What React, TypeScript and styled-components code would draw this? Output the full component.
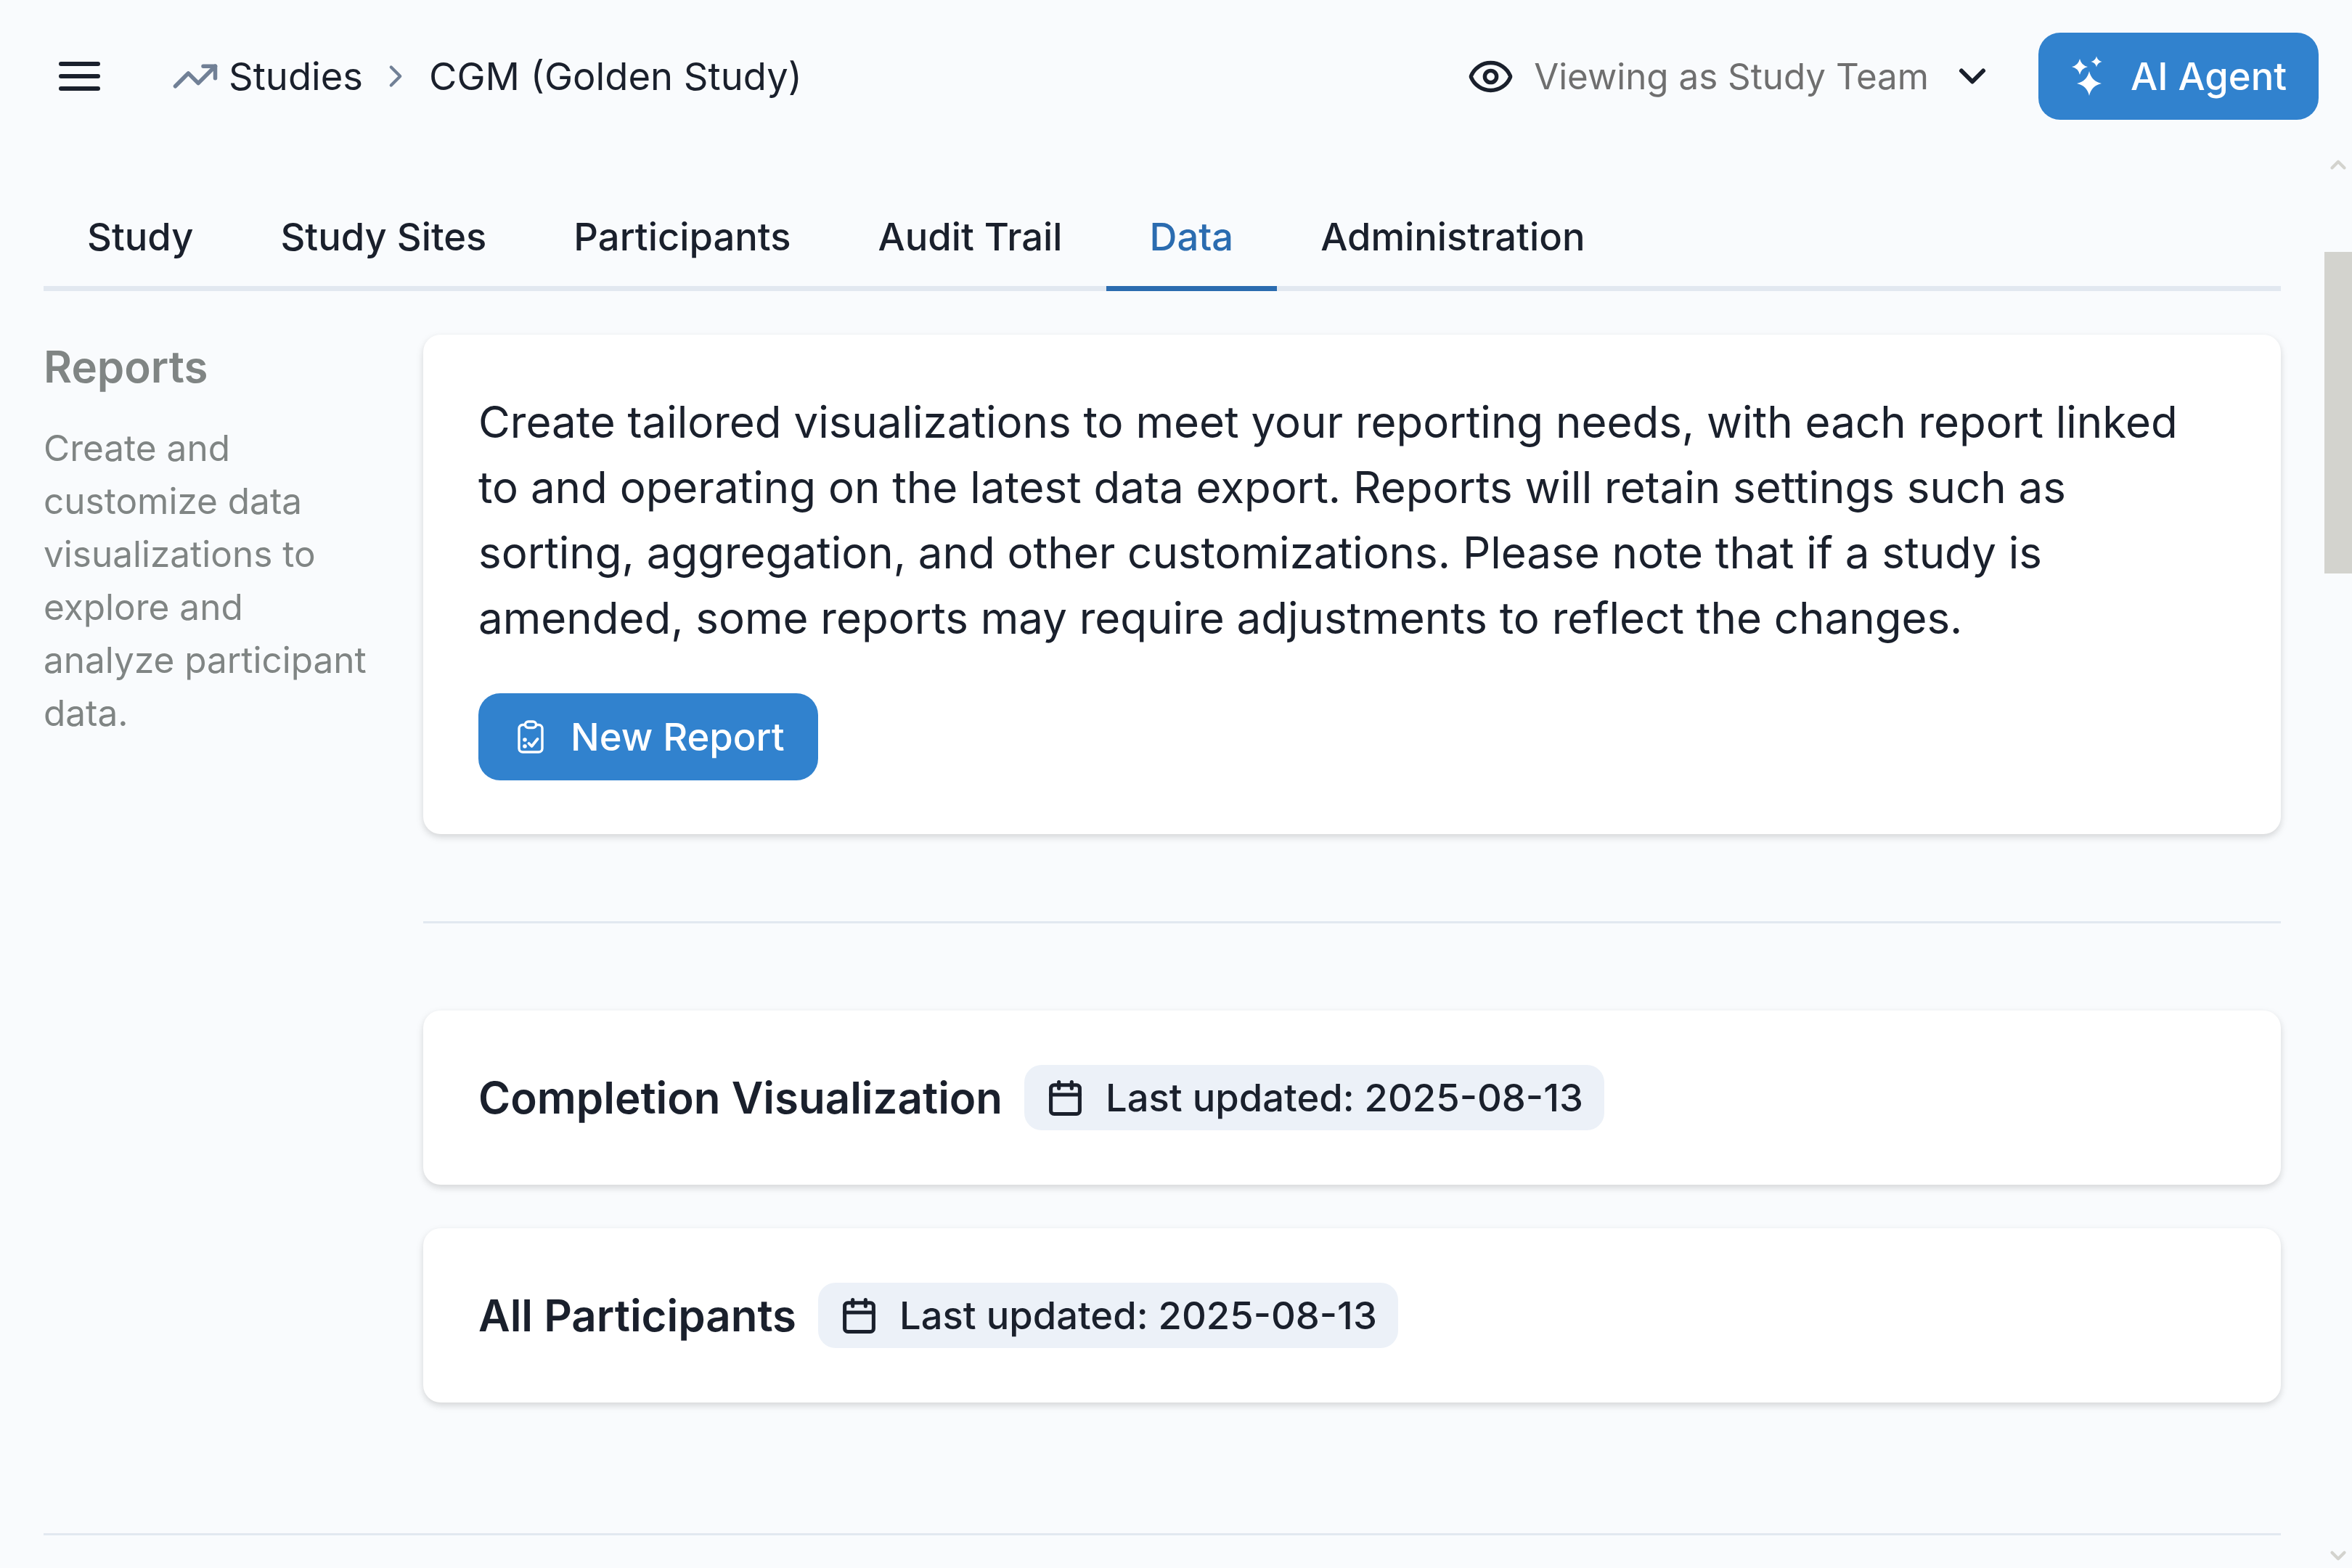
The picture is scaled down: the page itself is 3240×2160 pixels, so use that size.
import React from "react";
import styled, { createGlobalStyle } from "styled-components";
import { TrendingUp, ChevronRight, ChevronDown, ChevronUp, Eye, Calendar } from "lucide-react";

const Global = createGlobalStyle`
  html, body { margin: 0; padding: 0; background: #f9fbfd; }
  body { font-family: Inter, "Liberation Sans", sans-serif; color: #1a202c; }
  * { box-sizing: border-box; }
`;

const Page = styled.div`
  position: relative;
  width: 3240px;
  height: 2160px;
  overflow: hidden;
  background: #f9fbfd;
`;

const Header = styled.header`
  display: flex;
  align-items: center;
  height: 210px;
  padding: 0 46px 0 80px;
`;

const MenuButton = styled.span`
  display: flex;
  margin-right: 98px;
  color: #1a202c;
`;

const Crumb = styled.span`
  display: flex;
  align-items: center;
  font-size: 52.5px;
  color: #1a202c;
`;

const CrumbIcon = styled.span`
  display: flex;
  color: #718096;
  margin-right: 13px;
`;

const CrumbSep = styled.span`
  display: flex;
  color: #718096;
  margin: 0 21px 0 20px;
`;

const Spacer = styled.div`
  flex: 1;
`;

const ViewAs = styled.div`
  display: flex;
  align-items: center;
  font-size: 49.3px;
  color: #6f6f6f;
  margin-right: 61px;
`;

const ViewLabel = styled.span`
  margin: 0 30px 0 27px;
`;

const ViewIcon = styled.span`
  display: flex;
  color: #1a202c;
`;

const PrimaryButton = styled.button<{ $width: number; $pad: number; $gap: number }>`
  display: flex;
  align-items: center;
  width: ${(p) => p.$width}px;
  height: 120px;
  padding: 0 0 0 ${(p) => p.$pad}px;
  gap: ${(p) => p.$gap}px;
  border: none;
  border-radius: 30px;
  background: #3182ce;
  color: #fff;
  font-family: inherit;
  font-size: 52.5px;
  font-weight: 500;
  white-space: nowrap;
`;

const Content = styled.main`
  padding: 0 98px 0 60px;
`;

const Tabs = styled.nav`
  display: flex;
  height: 191px;
  border-bottom: 7px solid #e2e8f0;
`;

const Tab = styled.div<{ $active?: boolean }>`
  display: flex;
  align-items: center;
  padding: 48px 60px 0;
  height: 191px;
  font-size: 52.5px;
  font-weight: 500;
  color: ${(p) => (p.$active ? "#2b6cb0" : "#1a202c")};
  border-bottom: 7px solid ${(p) => (p.$active ? "#2b6cb0" : "transparent")};
`;

const Row = styled.section`
  display: flex;
  margin-top: 60px;
`;

const Aside = styled.aside`
  width: 523px;
  flex: none;
  padding-right: 60px;
`;

const AsideTitle = styled.h2`
  margin: -1px 0 31px;
  font-size: 60px;
  line-height: 90px;
  font-weight: 600;
  color: #808584;
`;

const AsideText = styled.p`
  margin: 0;
  font-size: 49.5px;
  line-height: 73px;
  color: #808584;
`;

const Column = styled.div`
  flex: 1;
  min-width: 0;
`;

const Card = styled.div`
  background: #fff;
  border-radius: 24px;
  padding: 76px 76px 74px;
  box-shadow: 0 4px 12px rgba(0, 0, 0, 0.1), 0 4px 8px rgba(0, 0, 0, 0.06);
`;

const Intro = styled.p`
  margin: -1px 0 59px;
  font-size: 60px;
  line-height: 90px;
`;

const Divider = styled.hr<{ $margin: string }>`
  border: none;
  height: 3px;
  background: #e2e8f0;
  margin: ${(p) => p.$margin};
`;

const ReportCard = styled(Card)`
  display: flex;
  align-items: center;
  height: 240px;
  padding: 0 76px;
  margin-bottom: 60px;
`;

const ReportTitle = styled.h3`
  margin: 0 30px 0 0;
  font-size: 60px;
  font-weight: 600;
`;

const Chip = styled.div`
  display: flex;
  align-items: center;
  height: 90px;
  padding: 0 29px 0 30px;
  gap: 29px;
  border-radius: 24px;
  background: #ecf1f8;
  font-size: 52.5px;
  font-weight: 500;
`;

const ScrollThumb = styled.div`
  position: absolute;
  right: 0;
  top: 347px;
  width: 38px;
  height: 443px;
  background: #d3d3ce;
`;

const ScrollArrow = styled.span<{ $top: number }>`
  position: absolute;
  right: 2px;
  top: ${(p) => p.$top}px;
  display: flex;
  color: #d3d3ce;
`;

function MenuIcon() {
  return (
    <svg width="58" height="46" viewBox="0 0 58 46" fill="none" stroke="#1a202c" strokeWidth="6" strokeLinecap="round">
      <path d="M4 6 H55" />
      <path d="M4 23 H55" />
      <path d="M4 40 H55" />
    </svg>
  );
}

function SparkIcon() {
  const star = (cx: number, cy: number, r: number) => {
    const k = r * 0.18;
    return `M${cx} ${cy - r} Q${cx + k} ${cy - k} ${cx + r} ${cy} Q${cx + k} ${cy + k} ${cx} ${cy + r} Q${cx - k} ${cy + k} ${cx - r} ${cy} Q${cx - k} ${cy - k} ${cx} ${cy - r} Z`;
  };
  return (
    <svg width="44" height="56" viewBox="0 0 44 56" fill="#fff">
      <path d={star(25, 38, 17)} />
      <path d={star(12, 15, 11)} />
      <path d={star(35, 8, 7.5)} />
    </svg>
  );
}

function ReportIcon() {
  return (
    <svg width="36" height="46" viewBox="0 0 36 46" fill="none" stroke="#fff" strokeWidth="3.4" strokeLinecap="round" strokeLinejoin="round">
      <path d="M10 6.5 H7 a5 5 0 0 0 -5 5 V39 a5 5 0 0 0 5 5 H29 a5 5 0 0 0 5 -5 V11.5 a5 5 0 0 0 -5 -5 H26" />
      <rect x="10.5" y="2" width="15" height="8.5" rx="4.2" />
      <path d="M15.5 32 L19.5 36 L27.5 26" strokeWidth="3.8" />
      <circle cx="10" cy="27" r="1.1" fill="#fff" />
      <circle cx="10" cy="36" r="1.1" fill="#fff" />
    </svg>
  );
}

const Updated = () => (
  <Chip>
    <Calendar size={53} strokeWidth={2.3} />
    Last updated: 2025-08-13
  </Chip>
);

export default function App() {
  return (
    <Page>
      <Global />
      <Header>
        <MenuButton>
          <MenuIcon />
        </MenuButton>
        <CrumbIcon>
          <TrendingUp size={66} strokeWidth={2} />
        </CrumbIcon>
        <Crumb>Studies</Crumb>
        <CrumbSep>
          <ChevronRight size={50} strokeWidth={2} />
        </CrumbSep>
        <Crumb>CGM (Golden Study)</Crumb>
        <Spacer />
        <ViewAs>
          <ViewIcon>
            <Eye size={65} strokeWidth={2} />
          </ViewIcon>
          <ViewLabel>Viewing as Study Team</ViewLabel>
          <ViewIcon>
            <ChevronDown size={60} strokeWidth={2.4} />
          </ViewIcon>
        </ViewAs>
        <PrimaryButton $width={386} $pad={45} $gap={38}>
          <SparkIcon />
          AI Agent
        </PrimaryButton>
      </Header>
      <Content>
        <Tabs>
          <Tab>Study</Tab>
          <Tab>Study Sites</Tab>
          <Tab>Participants</Tab>
          <Tab>Audit Trail</Tab>
          <Tab $active>Data</Tab>
          <Tab>Administration</Tab>
        </Tabs>
        <Row>
          <Aside>
            <AsideTitle>Reports</AsideTitle>
            <AsideText>
              Create and customize data visualizations to explore and analyze participant data.
            </AsideText>
          </Aside>
          <Column>
            <Card>
              <Intro>
                Create tailored visualizations to meet your reporting needs, with each report linked to and
                operating on the latest data export. Reports will retain settings such as sorting, aggregation,
                and other customizations. Please note that if a study is amended, some reports may require
                adjustments to reflect the changes.
              </Intro>
              <PrimaryButton $width={468} $pad={54} $gap={37}>
                <ReportIcon />
                New Report
              </PrimaryButton>
            </Card>
            <Divider $margin="120px 0" />
            <ReportCard>
              <ReportTitle>Completion Visualization</ReportTitle>
              <Updated />
            </ReportCard>
            <ReportCard>
              <ReportTitle>All Participants</ReportTitle>
              <Updated />
            </ReportCard>
          </Column>
        </Row>
        <Divider $margin="120px 0 0" />
      </Content>
      <ScrollArrow $top={210}>
        <ChevronUp size={34} strokeWidth={3} />
      </ScrollArrow>
      <ScrollThumb />
      <ScrollArrow $top={2126}>
        <ChevronDown size={34} strokeWidth={3} />
      </ScrollArrow>
    </Page>
  );
}
